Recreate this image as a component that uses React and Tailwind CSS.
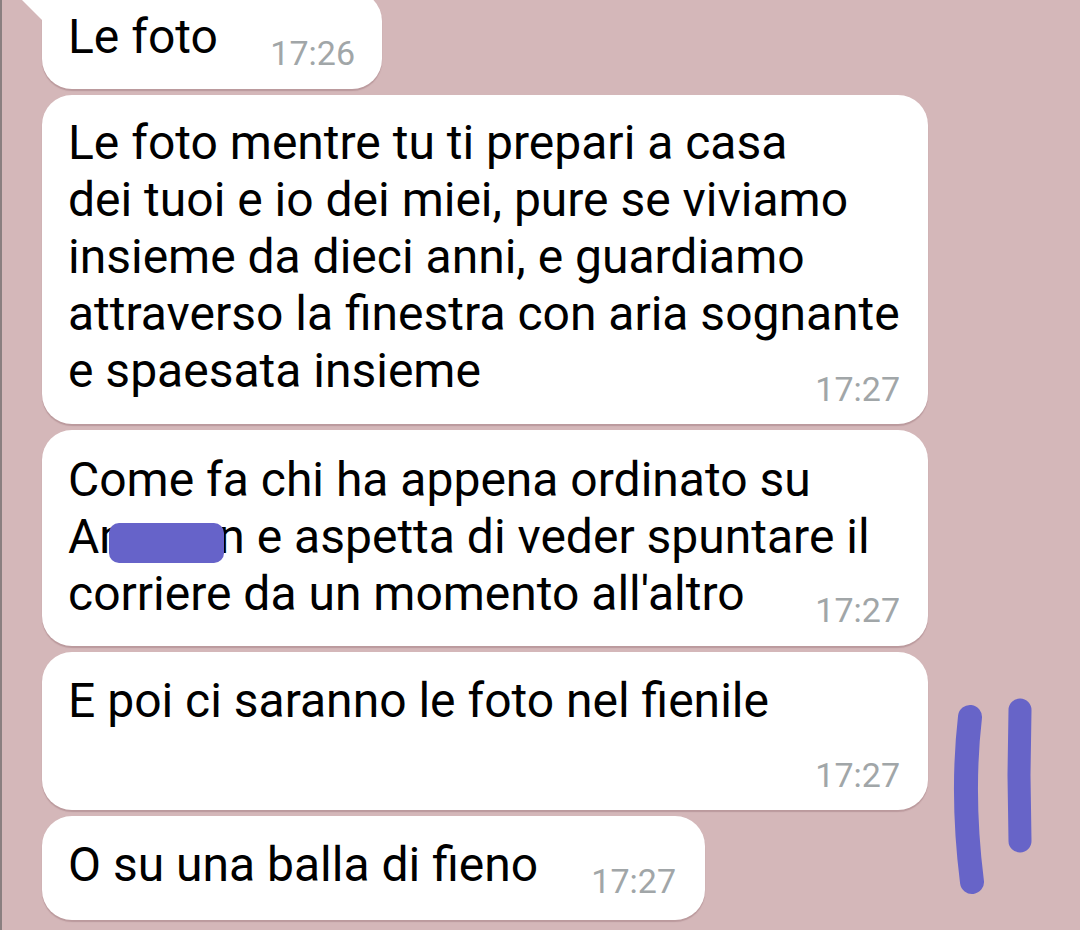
import React from "react";

const Time = ({ children, className = "" }) => (
	<div className={`text-[34px] leading-[40px] text-[#a1a6a8] ${className}`}>{children}</div>
);

const App = () => {
	return (
		<div className="relative h-[930px] w-[1080px] overflow-hidden border-l-2 border-[#8a7f80] bg-[#d4b7b9] font-['Roboto',sans-serif] text-black">
			<div className="-mt-[9px] flex flex-col gap-[6px] pl-[40px]">
				{/* first bubble, with tail */}
				<div className="relative flex w-[340px] justify-between rounded-[30px] rounded-tl-none bg-white pl-[26px] pr-[27px] pt-[17px] pb-[16px] shadow-[0_2px_1px_rgba(140,100,105,0.35)]">
					<div className="absolute left-[-29px] top-0 h-[29px] w-[29px] bg-white [clip-path:polygon(0_0,100%_0,100%_100%)]" />
					<p className="text-[48px] leading-[57px]">Le foto</p>
					<Time className="mt-[25px]">17:26</Time>
				</div>

				<div className="w-[886px] rounded-[30px] bg-white pl-[26px] pr-[28px] pt-[19px] pb-[15px] shadow-[0_2px_1px_rgba(140,100,105,0.35)]">
					<p className="whitespace-nowrap text-[48px] leading-[57px]">
						Le foto mentre tu ti prepari a casa
						<br />
						dei tuoi e io dei miei, pure se viviamo
						<br />
						insieme da dieci anni, e guardiamo
						<br />
						attraverso la finestra con aria sognante
						<br />
						e spaesata insieme
					</p>
					<Time className="-mt-[30px] text-right">17:27</Time>
				</div>

				<div className="w-[886px] rounded-[30px] bg-white pl-[26px] pr-[28px] pt-[21px] pb-[16px] shadow-[0_2px_1px_rgba(140,100,105,0.35)]">
					<p className="whitespace-nowrap text-[48px] leading-[57px]">
						Come fa chi ha appena ordinato su
						<br />
						<span className="relative">
							Amazon
							<span className="absolute left-[41px] top-[15px] h-[40px] w-[115px] rounded-[10px] bg-[#6663c9]" />
						</span>{" "}
						e aspetta di veder spuntare il
					</p>
					<div className="flex justify-between">
						<p className="whitespace-nowrap text-[48px] leading-[57px]">corriere da un momento all'altro</p>
						<Time className="mt-[25px]">17:27</Time>
					</div>
				</div>

				<div className="w-[886px] rounded-[30px] bg-white pl-[26px] pr-[28px] pt-[20px] pb-[15px] shadow-[0_2px_1px_rgba(140,100,105,0.35)]">
					<p className="whitespace-nowrap text-[48px] leading-[57px]">E poi ci saranno le foto nel fienile</p>
					<Time className="mt-[26px] text-right">17:27</Time>
				</div>

				<div className="flex w-[663px] justify-between rounded-[30px] bg-white pl-[26px] pr-[29px] pt-[20px] pb-[19px] shadow-[0_2px_1px_rgba(140,100,105,0.35)]">
					<p className="whitespace-nowrap text-[48px] leading-[57px]">O su una balla di fieno</p>
					<Time className="mt-[25px]">17:27</Time>
				</div>
			</div>

			{/* scribbled marks */}
			<svg
				className="absolute left-[938px] top-[690px] h-[210px] w-[100px]"
				viewBox="0 0 100 210"
				fill="none"
				strokeLinecap="round"
				strokeLinejoin="round"
			>
				<path d="M30 27 Q21 105 32 192" stroke="#6764c8" strokeWidth="24" />
				<path d="M80 20 L79 85 L80 151" stroke="#6764c8" strokeWidth="23" />
			</svg>
		</div>
	);
};

export default App;
